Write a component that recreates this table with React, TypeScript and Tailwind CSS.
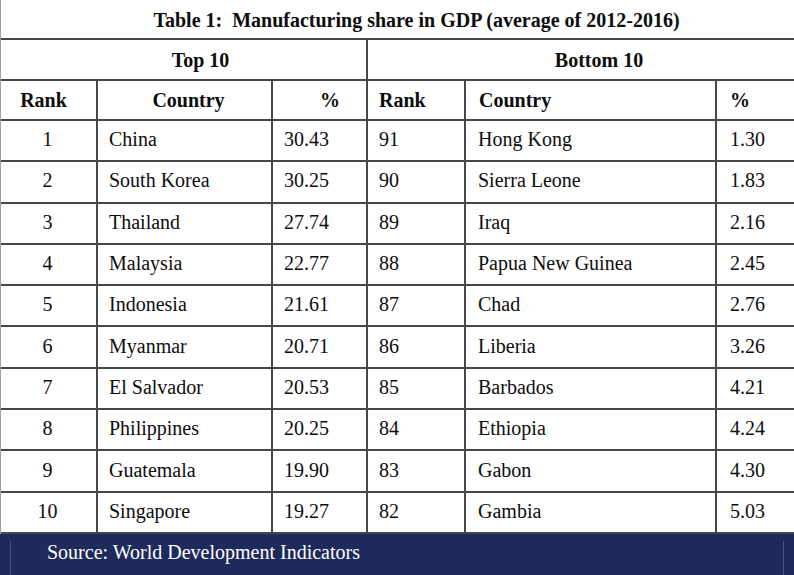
const TOP = [
  { rank: 1, country: 'China', pct: '30.43' },
  { rank: 2, country: 'South Korea', pct: '30.25' },
  { rank: 3, country: 'Thailand', pct: '27.74' },
  { rank: 4, country: 'Malaysia', pct: '22.77' },
  { rank: 5, country: 'Indonesia', pct: '21.61' },
  { rank: 6, country: 'Myanmar', pct: '20.71' },
  { rank: 7, country: 'El Salvador', pct: '20.53' },
  { rank: 8, country: 'Philippines', pct: '20.25' },
  { rank: 9, country: 'Guatemala', pct: '19.90' },
  { rank: 10, country: 'Singapore', pct: '19.27' },
];

const BOTTOM = [
  { rank: 91, country: 'Hong Kong', pct: '1.30' },
  { rank: 90, country: 'Sierra Leone', pct: '1.83' },
  { rank: 89, country: 'Iraq', pct: '2.16' },
  { rank: 88, country: 'Papua New Guinea', pct: '2.45' },
  { rank: 87, country: 'Chad', pct: '2.76' },
  { rank: 86, country: 'Liberia', pct: '3.26' },
  { rank: 85, country: 'Barbados', pct: '4.21' },
  { rank: 84, country: 'Ethiopia', pct: '4.24' },
  { rank: 83, country: 'Gabon', pct: '4.30' },
  { rank: 82, country: 'Gambia', pct: '5.03' },
];

const cell = 'border-2 border-[#474747] p-0 align-middle';

export default function App() {
  return (
    <div
      className="h-[575px] w-[794px] overflow-hidden bg-white text-[20px] leading-none text-[#0d0d0d]"
      style={{ fontFamily: '"Liberation Serif", "Times New Roman", serif' }}
    >
      <div className="border-l border-[#a0a0a0]">
        <table className="w-[796px] table-fixed border-collapse">
          <colgroup>
            <col className="w-[96px]" />
            <col className="w-[175px]" />
            <col className="w-[95px]" />
            <col className="w-[98px]" />
            <col className="w-[251px]" />
            <col className="w-[81px]" />
          </colgroup>
          <tbody>
            <tr className="h-[39px]">
              <td
                colSpan={6}
                className="border-b-2 border-[#474747] p-0 pl-[35px] pt-[1px] text-center text-[20px] font-bold"
              >
                Table 1:&nbsp; Manufacturing share in GDP (average of 2012-2016)
              </td>
            </tr>
            <tr className="h-[41px] font-bold">
              <td colSpan={3} className={`${cell} border-l-0 pl-[34px] text-center`}>
                Top 10
              </td>
              <td colSpan={3} className={`${cell} pl-[34px] text-center`}>
                Bottom 10
              </td>
            </tr>
            <tr className="h-[40px] font-bold">
              <td className={`${cell} border-l-0 pr-[10px] text-center`}>Rank</td>
              <td className={`${cell} pl-[8px] text-center`}>Country</td>
              <td className={`${cell} pl-[47px]`}>%</td>
              <td className={`${cell} pl-[11px]`}>Rank</td>
              <td className={`${cell} pl-[13px]`}>Country</td>
              <td className={`${cell} pl-[13px]`}>%</td>
            </tr>
            {TOP.map((t, i) => {
              const b = BOTTOM[i];
              return (
                <tr key={t.rank} className="h-[41.3px]">
                  <td className={`${cell} border-l-0 pb-[3px] pr-[2px] text-center`}>{t.rank}</td>
                  <td className={`${cell} pb-[3px] pl-[11px]`}>{t.country}</td>
                  <td className={`${cell} pb-[3px] pl-[11px]`}>{t.pct}</td>
                  <td className={`${cell} pb-[3px] pl-[11px]`}>{b.rank}</td>
                  <td className={`${cell} pb-[3px] pl-[12px]`}>{b.country}</td>
                  <td className={`${cell} pb-[3px] pl-[13px]`}>{b.pct}</td>
                </tr>
              );
            })}
          </tbody>
        </table>
      </div>
      <div className="h-[42px] bg-[#1f2a5c] px-[10px] pt-[7px]">
        <div className="flex h-full items-center border-x border-[#46518a] pb-[12px] pl-[36px] text-[20px] text-white">
          Source: World Development Indicators
        </div>
      </div>
    </div>
  );
}
